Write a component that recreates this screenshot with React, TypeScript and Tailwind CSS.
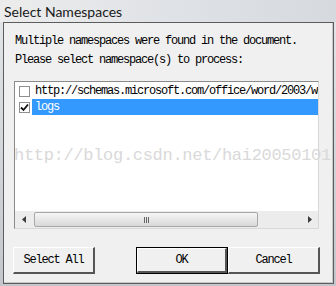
import React from 'react';

const mono = { fontFamily: '"Liberation Mono", "Courier New", monospace' };

function Arrow({ dir }: { dir: 'left' | 'right' }) {
  return (
    <div className="flex h-[17px] w-[17px] items-center justify-center">
      <svg width="4" height="7" viewBox="0 0 4 7">
        {dir === 'left' ? <path d="M4 0 L0 3.5 L4 7 Z" fill="#3c3c3c" /> : <path d="M0 0 L4 3.5 L0 7 Z" fill="#3c3c3c" />}
      </svg>
    </div>
  );
}

function Check({ checked }: { checked?: boolean }) {
  return (
    <div className="flex h-[11px] w-[11px] items-center justify-center border border-[#8f8f8f] bg-white">
      {checked && (
        <svg width="9" height="9" viewBox="0 0 9 9">
          <path d="M1 4.5 L3.5 7 L8 1.5" fill="none" stroke="#111" strokeWidth="1.8" />
        </svg>
      )}
    </div>
  );
}

function Button({ label, primary, className }: { label: string; primary?: boolean; className: string }) {
  return (
    <div className={`h-[27px] ${primary ? 'border border-black' : ''} ${className}`}>
      <div className="flex h-full w-full items-center justify-center border-t border-l border-white border-r-2 border-b-2 border-r-[#555] border-b-[#555] bg-[#f0f0f0] text-[12px] tracking-[-1.2px] text-black" style={mono}>
        {label}
      </div>
    </div>
  );
}

export default function App() {
  return (
    <div className="relative h-[286px] w-[336px] overflow-hidden bg-gradient-to-b from-[#e4e6e9] to-[#c3c7cc]">
      <div className="flex h-[22px] items-center bg-gradient-to-r from-[#ececec] via-[#dfe2e6] to-[#d6d9de] pl-[4px] text-[14px] text-[#1a1a1a]" style={{ fontFamily: 'Lato, "Noto Sans", sans-serif' }}>
        Select Namespaces
      </div>
      <div className="ml-[3px] flex h-[262px] w-[331px] flex-col border border-[#5c5c5c] bg-[#f0f0f0] shadow-[inset_-1px_-1px_0_#c8c8c8]">
        <div className="pl-[11px] pt-[9px] text-[12px] leading-[19px] tracking-[-1.2px] text-black" style={mono}>
          <div>Multiple namespaces were found in the document.</div>
          <div>Please select namespace(s) to process:</div>
        </div>
        <div className="ml-[10px] mt-[11px] flex h-[148px] w-[305px] flex-col border border-[#8a8a8a] border-r-[#d8d8d8] border-b-[#d8d8d8] bg-white">
          <div className="pt-[1px]">
            <div className="flex h-[16px] items-center">
              <div className="flex w-[15px] justify-end pl-[2px]"><Check /></div>
              <div className="ml-[2px] flex h-full flex-1 items-center overflow-hidden whitespace-nowrap pl-[3px] text-[12px] tracking-[-1.2px] text-black" style={mono}>
                http://schemas.microsoft.com/office/word/2003/wo
              </div>
            </div>
            <div className="flex h-[16px] items-center">
              <div className="flex w-[15px] justify-end pl-[2px]"><Check checked /></div>
              <div className="ml-[2px] flex h-full flex-1 items-center bg-[#3399ff] pl-[3px] text-[12px] tracking-[-1.2px] text-white" style={mono}>
                logs
              </div>
            </div>
          </div>
          <div className="flex-1" />
          <div className="flex h-[17px] items-center bg-[#ececec]">
            <Arrow dir="left" />
            <div className="ml-[2px] flex h-[15px] w-[224px] items-center justify-center rounded-[2px] border border-[#a8a8a8] bg-gradient-to-b from-[#f6f6f6] to-[#d8d8d8]">
              <div className="flex gap-[1px]">
                <div className="h-[6px] w-[1px] bg-[#666]" />
                <div className="h-[6px] w-[1px] bg-[#666]" />
                <div className="h-[6px] w-[1px] bg-[#666]" />
              </div>
            </div>
            <div className="flex-1" />
            <Arrow dir="right" />
          </div>
        </div>
        <div className="mt-[18px] flex">
          <Button label="Select All" className="ml-[9px] w-[82px]" />
          <Button label="OK" primary className="ml-[41px] w-[92px]" />
          <Button label="Cancel" className="w-[92px]" />
        </div>
      </div>
      <div className="pointer-events-none absolute left-[14px] top-[143px] whitespace-nowrap text-[17px] tracking-[-0.3px] text-[#d9d9d9]" style={mono}>
        http://blog.csdn.net/hai20050101
      </div>
    </div>
  );
}
